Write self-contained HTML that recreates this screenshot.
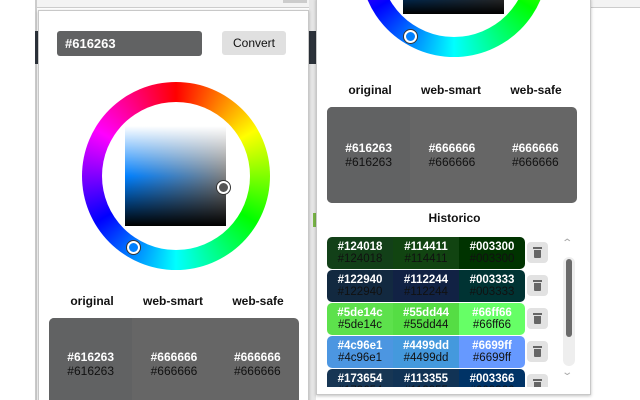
<!DOCTYPE html>
<html style="overflow:hidden;width:640px;height:400px"><head><meta charset="utf-8"><style>
*{margin:0;padding:0;box-sizing:border-box}
body{width:640px;height:400px;overflow:hidden;background:#fff;position:relative;font-family:"Liberation Sans",Arial,sans-serif}
.abs{position:absolute}
.pop{position:absolute;background:#fff;border:1px solid #c8c8c8;box-shadow:0 1px 3px rgba(0,0,0,.25);overflow:hidden}
.wheel{position:absolute;width:188px;height:188px;border-radius:50%;background:conic-gradient(#f00,#ff0,#0f0,#0ff,#00f,#f0f,#f00)}
.wheel .in{position:absolute;left:20px;top:20px;width:148px;height:148px;border-radius:50%;background:#fff}
.sq{position:absolute;width:101px;height:100px;background:linear-gradient(to bottom,#fff 0%,rgba(255,255,255,0) 50%,rgba(0,0,0,0) 50%,#000 100%),linear-gradient(to right,#0080ff,#808080)}
.mk{position:absolute;width:13px;height:13px;border-radius:50%;border:2px solid #fff;box-shadow:0 0 0 1px #333}
.lbl{position:absolute;font-size:12px;font-weight:bold;color:#111;width:90px;text-align:center}
.sw{position:absolute;width:250px;background:#666;border-radius:5px;display:flex;overflow:hidden}
.sw div{flex:1;display:flex;flex-direction:column;justify-content:center;align-items:center;font-size:12px;line-height:14px}
.t{color:#fff;font-weight:bold}.b{color:#111}
.row{position:absolute;left:0;width:198px;height:32px;border-radius:5px;display:flex;overflow:hidden}
.row div{flex:1;display:flex;flex-direction:column;justify-content:center;align-items:center;font-size:11.5px;line-height:12px}
.tr{position:absolute;left:200px;width:21px;height:21px;border-radius:4px;background:#e2e2e2}
.tr::before{content:"";position:absolute;left:6px;top:5px;width:9px;height:2px;background:#666}
.tr::after{content:"";position:absolute;left:7px;top:8px;width:7px;height:8px;background:#666;border-radius:0 0 1px 1px}
</style></head><body>
<div class="abs" style="left:35px;top:0;width:605px;height:8px;background:#f3f3f3;border-bottom:1px solid #ccc"></div>
<div class="abs" style="left:35px;top:0;width:2px;height:400px;background:#ccc"></div>
<div class="abs" style="left:35px;top:31px;width:280px;height:33px;background:#2d333b"></div>
<div class="abs" style="left:309px;top:0;width:7px;height:400px;background:#e6e6e6"></div>
<div class="abs" style="left:309px;top:31px;width:7px;height:33px;background:#2d333b"></div>
<div class="abs" style="left:313px;top:213px;width:5px;height:14px;background:#7ab648"></div>
<div class="abs" style="left:283px;top:0;width:24px;height:3px;background:#ccc"></div>

<div class="pop" style="left:38px;top:10px;width:271px;height:392px">
 <div class="abs" style="left:18px;top:20px;width:145px;height:25px;background:#616263;border-radius:3px;color:#fff;font-size:13px;font-weight:bold;line-height:25px;padding-left:8px">#616263</div>
 <div class="abs" style="left:183px;top:20px;width:64px;height:24px;background:#e0e0e0;border-radius:3px;color:#111;font-size:12px;line-height:24px;text-align:center">Convert</div>
 <div class="wheel" style="left:43px;top:71px"><div class="in"></div></div>
 <div class="sq" style="left:86px;top:115px"></div>
 <div class="mk" style="left:178px;top:170px;background:#555"></div>
 <div class="mk" style="left:88px;top:230px;background:#0080ff"></div>
 <div class="lbl" style="left:8px;top:283px">original</div>
 <div class="lbl" style="left:89px;top:283px">web-smart</div>
 <div class="lbl" style="left:174px;top:283px">web-safe</div>
 <div class="sw" style="left:10px;top:307px;height:100px"><div style="background:#616263;padding-bottom:8px"><span class="t">#616263</span><span class="b">#616263</span></div><div style="padding-bottom:8px"><span class="t">#666666</span><span class="b">#666666</span></div><div style="padding-bottom:8px"><span class="t">#666666</span><span class="b">#666666</span></div></div>
</div>

<div class="pop" style="left:316px;top:-2px;width:275px;height:397px">
 <div class="wheel" style="left:43px;top:-130px"><div class="in"></div></div>
 <div class="sq" style="left:86px;top:-85px"></div>
 <div class="mk" style="left:87px;top:31px;background:#0080ff"></div>
 <div class="lbl" style="left:8px;top:84px">original</div>
 <div class="lbl" style="left:89px;top:84px">web-smart</div>
 <div class="lbl" style="left:174px;top:84px">web-safe</div>
 <div class="sw" style="left:10px;top:108px;height:96px"><div style="background:#616263"><span class="t">#616263</span><span class="b">#616263</span></div><div><span class="t">#666666</span><span class="b">#666666</span></div><div><span class="t">#666666</span><span class="b">#666666</span></div></div>
 <div class="abs" style="left:0;top:212px;width:275px;text-align:center;font-size:12px;font-weight:bold;color:#111">Historico</div>
 <div class="abs" style="left:10px;top:238px;width:225px;height:150px;overflow:hidden">
 <div class="row" style="top:0"><div style="background:#124018"><span class="t">#124018</span><span class="b">#124018</span></div><div style="background:#114411"><span class="t">#114411</span><span class="b">#114411</span></div><div style="background:#003300"><span class="t">#003300</span><span class="b">#003300</span></div></div>
 <div class="tr" style="top:5px"></div>
 <div class="row" style="top:33px"><div style="background:#122940"><span class="t">#122940</span><span class="b">#122940</span></div><div style="background:#112244"><span class="t">#112244</span><span class="b">#112244</span></div><div style="background:#003333"><span class="t">#003333</span><span class="b">#003333</span></div></div>
 <div class="tr" style="top:38px"></div>
 <div class="row" style="top:66px"><div style="background:#5de14c"><span class="t">#5de14c</span><span class="b">#5de14c</span></div><div style="background:#55dd44"><span class="t">#55dd44</span><span class="b">#55dd44</span></div><div style="background:#66ff66"><span class="t">#66ff66</span><span class="b">#66ff66</span></div></div>
 <div class="tr" style="top:71px"></div>
 <div class="row" style="top:99px"><div style="background:#4c96e1"><span class="t">#4c96e1</span><span class="b">#4c96e1</span></div><div style="background:#4499dd"><span class="t">#4499dd</span><span class="b">#4499dd</span></div><div style="background:#6699ff"><span class="t">#6699ff</span><span class="b">#6699ff</span></div></div>
 <div class="tr" style="top:104px"></div>
 <div class="row" style="top:132px"><div style="background:#173654"><span class="t">#173654</span><span class="b">#173654</span></div><div style="background:#113355"><span class="t">#113355</span><span class="b">#113355</span></div><div style="background:#003366"><span class="t">#003366</span><span class="b">#003366</span></div></div>
 <div class="tr" style="top:137px"></div>
 </div>
 <div class="abs" style="left:246px;top:239px;font-size:10px;color:#aaa;transform:scaleX(1.4)">&#8963;</div>
 <div class="abs" style="left:246px;top:258px;width:12px;height:109px;background:#eee;border-radius:6px"></div>
 <div class="abs" style="left:249px;top:260px;width:6px;height:78px;background:#6b6b6b;border-radius:3px"></div>
 <div class="abs" style="left:246px;top:368px;font-size:10px;color:#aaa;transform:scaleX(1.4)">&#8964;</div>
</div>
</body></html>
